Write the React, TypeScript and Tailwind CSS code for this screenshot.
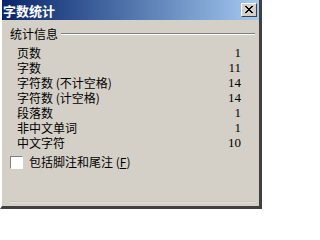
const rows: [string, string][] = [
  ["页数", "1"],
  ["字数", "11"],
  ["字符数 (不计空格)", "14"],
  ["字符数 (计空格)", "14"],
  ["段落数", "1"],
  ["非中文单词", "1"],
  ["中文字符", "10"],
];

const cjk = { fontFamily: '"Noto Sans CJK SC", "Noto Sans", sans-serif' };
const num = { fontFamily: '"Liberation Serif", serif' };

export default function App() {
  return (
    <div className="w-[262px] h-[209px] overflow-hidden bg-[#d4d0c8] border-l-2 border-l-[#ffffff] border-r-[3px] border-r-[#404040] border-b-[3px] border-b-[#404040] flex flex-col">
      {/* title bar */}
      <div className="h-[20px] flex items-center bg-gradient-to-r from-[#0a246a] to-[#a6caf0] pl-[1px] pr-[2px]">
        <span className="text-white font-bold text-[13px] leading-none" style={cjk}>
          字数统计
        </span>
        <div className="flex-1" />
        <button className="w-[16px] h-[14px] bg-[#d4d0c8] border-t border-l border-t-white border-l-white border-b border-r border-b-[#404040] border-r-[#404040] flex items-center justify-center">
          <svg width="9" height="8" viewBox="0 0 9 8">
            <path d="M1 0 L8 7 M0 0 L7 7 M8 0 L1 7 M7 0 L0 7" stroke="#000" strokeWidth="1" shapeRendering="crispEdges" />
          </svg>
        </button>
      </div>

      {/* group box */}
      <div className="flex-1 pl-[8px] pr-[4px] pt-[7px] flex flex-col" style={cjk}>
        <div className="flex items-center h-[14px]">
          <span className="text-[12px] leading-[14px] text-black">统计信息</span>
          <div className="flex-1 ml-[3px] border-t border-t-[#808080] border-b border-b-white" />
        </div>
        <div className="flex flex-col mt-[4px] pl-[7px] pr-[14px]">
          {rows.map(([label, value]) => (
            <div key={label} className="h-[15px] flex items-center justify-between text-[12px] leading-[15px] text-black">
              <span>{label}</span>
              <span className="text-[13px] leading-[15px]" style={num}>{value}</span>
            </div>
          ))}
        </div>
        <div className="flex items-center mt-[5px] h-[14px]">
          <div className="w-[13px] h-[13px] bg-white border-t border-l border-t-[#808080] border-l-[#808080] border-b border-r border-b-white border-r-white" />
          <span className="ml-[6px] text-[12px] leading-[14px] text-black">
            包括脚注和尾注 (<span className="underline">F</span>)
          </span>
        </div>
        <div className="flex-1" />
        <div className="h-[2px] mb-[3px] border-t border-t-[#c8c4bc] border-b border-b-[#e4e2dc]" />
      </div>
    </div>
  );
}
